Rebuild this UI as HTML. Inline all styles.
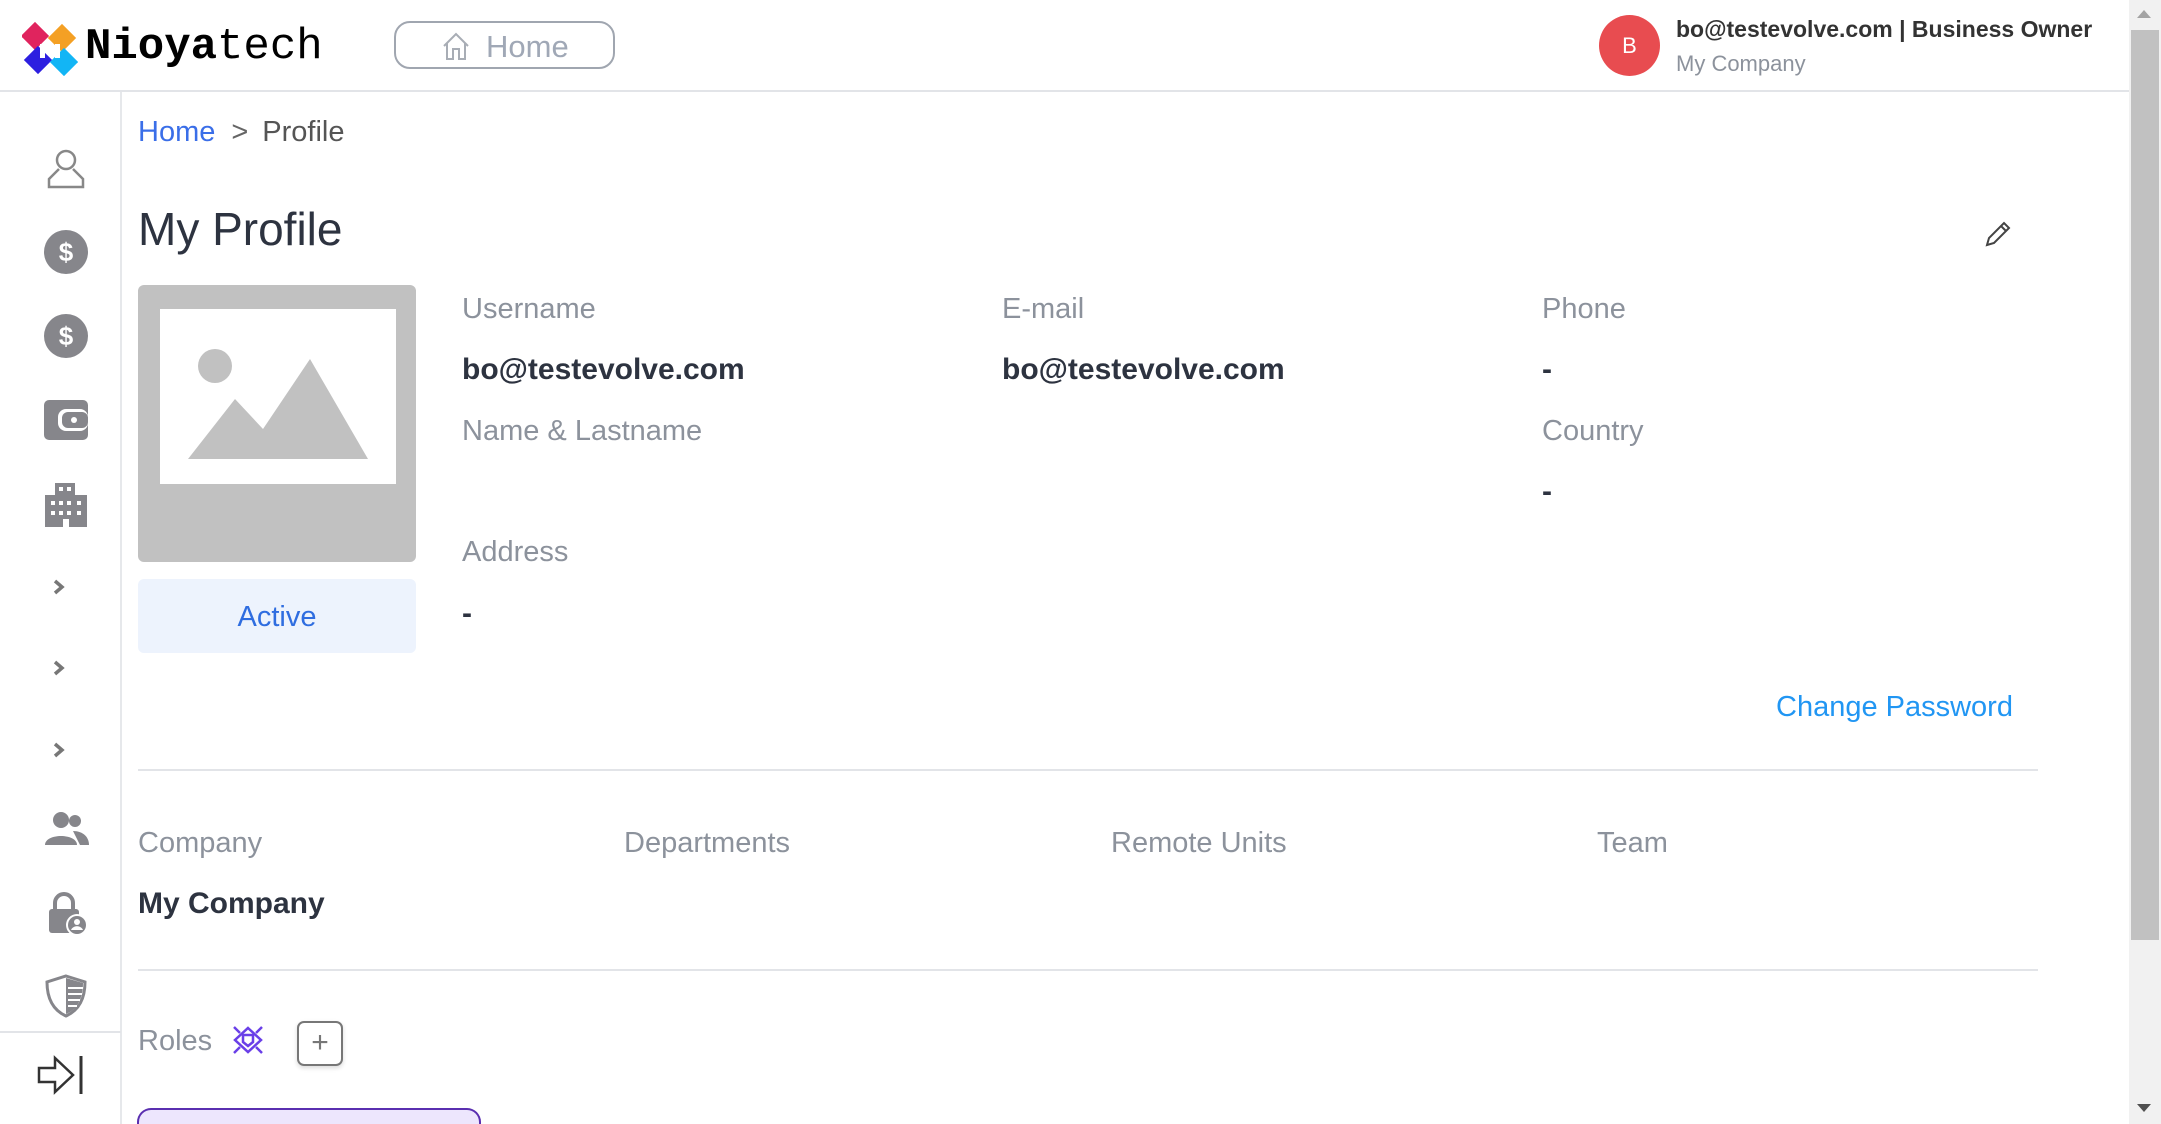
<!DOCTYPE html>
<html style="overflow:hidden;width:2161px;height:1124px"><head><meta charset="utf-8"><style>
*{margin:0;padding:0;box-sizing:border-box}
body{width:2161px;height:1124px;overflow:hidden;background:#fff;font-family:"Liberation Sans",sans-serif;position:relative;color:#2d3340}
.a{position:absolute;white-space:nowrap}
.lbl{font-size:29px;color:#8c929c}
.val{font-size:30px;font-weight:bold;color:#2d3340}
.ic{position:absolute;left:43px;width:46px;height:46px}
</style></head><body>
<div class="a" style="left:0;top:90px;width:2129px;height:2px;background:#e2e4e8"></div>
<div class="a" style="left:120px;top:92px;width:2px;height:1032px;background:#e6e8eb"></div>
<div class="a" style="left:0;top:1031px;width:121px;height:2px;background:#e2e4e8"></div>
<div class="a" style="left:2129px;top:0;width:32px;height:1124px;background:#f1f1f1"></div>
<div class="a" style="left:2131px;top:30px;width:28px;height:910px;background:#c1c1c1"></div>
<div class="a" style="left:2137px;top:10px;border:7px solid transparent;border-bottom:8px solid #a3a3a3;border-top:0"></div>
<div class="a" style="left:2137px;top:1104px;border:7px solid transparent;border-top:8px solid #505050;border-bottom:0"></div>
<svg class="a" style="left:22px;top:20px" width="56" height="56" viewBox="0 0 56 56">
<rect x="3" y="6" width="20" height="20" transform="rotate(45 13 16)" fill="#e0245e"/>
<rect x="30" y="8" width="20" height="20" transform="rotate(45 40 18)" fill="#f4a024"/>
<rect x="6" y="30" width="20" height="20" transform="rotate(45 16 40)" fill="#2d1fe0"/>
<rect x="32" y="32" width="20" height="20" transform="rotate(45 42 42)" fill="#12b5f5"/>
<rect x="18" y="24" width="5" height="14" fill="#fff"/><rect x="33" y="24" width="5" height="14" fill="#fff"/>
</svg>
<div class="a" style="left:85px;top:22px;font-family:'Liberation Mono',monospace;font-size:44px;color:#000"><b>Nioya</b>tech</div>
<div class="a" style="left:394px;top:21px;width:221px;height:48px;border:2px solid #a0a6b0;border-radius:16px"></div>
<svg class="a" style="left:440px;top:30px" width="32" height="32" viewBox="0 0 32 32"><path d="M4 16 L16 4 L28 16 M7 13 V29 H13 V19 H19 V29 H25 V13" fill="none" stroke="#a8adb5" stroke-width="2"/></svg>
<div class="a" style="left:486px;top:29px;font-size:31px;color:#a0a8b6">Home</div>
<div class="a" style="left:1599px;top:15px;width:61px;height:61px;border-radius:50%;background:#e84c50;color:#fff;font-size:22px;text-align:center;line-height:61px">B</div>
<div class="a" style="left:1676px;top:16px;font-size:23px;font-weight:bold;color:#333">bo@testevolve.com | Business Owner</div>
<div class="a" style="left:1676px;top:51px;font-size:22px;color:#8c929c">My Company</div>
<svg class="ic" style="top:145px" viewBox="0 0 46 46"><circle cx="23" cy="15" r="9" fill="none" stroke="#888" stroke-width="2.5"/><path d="M16 24 L6 34 V42 H40 V34 L30 24" fill="none" stroke="#888" stroke-width="2.5"/></svg>
<svg class="ic" style="top:229px" viewBox="0 0 46 46"><circle cx="23" cy="23" r="22" fill="#86868b"/><text x="23" y="32" font-size="26" font-weight="bold" text-anchor="middle" fill="#fff" font-family="Liberation Sans">$</text></svg>
<svg class="ic" style="top:313px" viewBox="0 0 46 46"><circle cx="23" cy="23" r="22" fill="#86868b"/><text x="23" y="32" font-size="26" font-weight="bold" text-anchor="middle" fill="#fff" font-family="Liberation Sans">$</text></svg>
<svg class="ic" style="top:397px" viewBox="0 0 46 46"><rect x="1" y="3" width="44" height="40" rx="5" fill="#86868b"/><rect x="15" y="12" width="30" height="22" rx="8" fill="#fff"/><rect x="19" y="15" width="26" height="16" rx="6" fill="#86868b"/><circle cx="31" cy="23" r="3" fill="#fff"/></svg>
<svg class="ic" style="top:481px" viewBox="0 0 46 46"><path d="M12 2 H32 V14 H44 V46 H2 V14 H12Z" fill="#86868b"/><g fill="#fff"><rect x="16" y="6" width="4" height="4"/><rect x="24" y="6" width="4" height="4"/><rect x="8" y="20" width="4" height="4"/><rect x="16" y="20" width="4" height="4"/><rect x="24" y="20" width="4" height="4"/><rect x="34" y="20" width="4" height="4"/><rect x="8" y="30" width="4" height="4"/><rect x="16" y="30" width="4" height="4"/><rect x="24" y="30" width="4" height="4"/><rect x="34" y="30" width="4" height="4"/><rect x="20" y="38" width="6" height="8"/></g></svg>
<svg class="ic" style="top:564px;left:36px" viewBox="0 0 46 46"><path d="M19 17 L26 23 L19 29" fill="none" stroke="#777" stroke-width="3.5"/></svg>
<svg class="ic" style="top:645px;left:36px" viewBox="0 0 46 46"><path d="M19 17 L26 23 L19 29" fill="none" stroke="#777" stroke-width="3.5"/></svg>
<svg class="ic" style="top:727px;left:36px" viewBox="0 0 46 46"><path d="M19 17 L26 23 L19 29" fill="none" stroke="#777" stroke-width="3.5"/></svg>
<svg class="ic" style="top:807px" viewBox="0 0 46 46"><circle cx="18" cy="13" r="8" fill="#86868b"/><circle cx="32" cy="14" r="6" fill="#86868b"/><path d="M2 38 C2 26 34 26 34 38 Z" fill="#86868b"/><path d="M30 24 C40 24 46 30 46 38 H37 Z" fill="#86868b"/></svg>
<svg class="ic" style="top:891px" viewBox="0 0 46 46"><path d="M12 18 V12 A9 9 0 0 1 30 12 V18" fill="none" stroke="#86868b" stroke-width="4"/><rect x="6" y="18" width="30" height="24" rx="3" fill="#86868b"/><circle cx="34" cy="34" r="11" fill="#fff"/><circle cx="34" cy="34" r="9" fill="#86868b"/><circle cx="34" cy="31" r="3" fill="#fff"/><path d="M28 39 C30 34 38 34 40 39Z" fill="#fff"/></svg>
<svg class="ic" style="top:973px" viewBox="0 0 46 46"><path d="M23 3 L42 9 C42 28 34 38 23 43 C12 38 4 28 4 9Z" fill="none" stroke="#86868b" stroke-width="3"/><path d="M23 5 L40 10 C40 27 33 37 23 41Z" fill="#86868b"/><g stroke="#fff" stroke-width="2"><line x1="25" y1="15" x2="40" y2="15"/><line x1="25" y1="21" x2="39" y2="21"/><line x1="25" y1="27" x2="37" y2="27"/><line x1="25" y1="33" x2="34" y2="33"/></g></svg>
<svg class="a" style="left:36px;top:1052px" width="50" height="46" viewBox="0 0 50 46"><path d="M3 16 H19 V6 L37 23 L19 40 V30 H3Z" fill="none" stroke="#333" stroke-width="2.5"/><line x1="45" y1="4" x2="45" y2="42" stroke="#333" stroke-width="3"/></svg>
<div class="a" style="left:138px;top:116px;font-size:29px"><span style="color:#3a6ee8">Home</span><span style="color:#666;margin:0 14px 0 16px">&gt;</span><span style="color:#555">Profile</span></div>
<div class="a" style="left:138px;top:202px;font-size:46px;color:#2d3340">My Profile</div>
<svg class="a" style="left:1982px;top:218px" width="32" height="32" viewBox="0 0 32 32"><path d="M5 27 L7 20 L22 5 L27 10 L12 25Z M19 8 L24 13" fill="none" stroke="#444" stroke-width="2"/></svg>
<div class="a" style="left:138px;top:285px;width:278px;height:277px;background:#c1c1c1;border-radius:6px"></div>
<div class="a" style="left:160px;top:309px;width:236px;height:175px;background:#fff"></div>
<svg class="a" style="left:160px;top:309px" width="236" height="175" viewBox="0 0 236 175"><circle cx="55" cy="57" r="17" fill="#c1c1c1"/><path d="M28 150 L75 90 L103 120 L150 50 L208 150Z" fill="#c1c1c1"/></svg>
<div class="a" style="left:138px;top:579px;width:278px;height:74px;background:#edf3fd;border-radius:6px;color:#2f6de0;font-size:29px;text-align:center;line-height:76px">Active</div>
<div class="a lbl" style="left:462px;top:293px">Username</div>
<div class="a lbl" style="left:1002px;top:293px">E-mail</div>
<div class="a lbl" style="left:1542px;top:293px">Phone</div>
<div class="a val" style="left:462px;top:353px">bo@testevolve.com</div>
<div class="a val" style="left:1002px;top:353px">bo@testevolve.com</div>
<div class="a val" style="left:1542px;top:353px">-</div>
<div class="a lbl" style="left:462px;top:415px">Name &amp; Lastname</div>
<div class="a lbl" style="left:1542px;top:415px">Country</div>
<div class="a val" style="left:1542px;top:475px">-</div>
<div class="a lbl" style="left:462px;top:536px">Address</div>
<div class="a val" style="left:462px;top:597px">-</div>
<div class="a" style="left:1776px;top:691px;font-size:29px;color:#2196f3">Change Password</div>
<div class="a" style="left:138px;top:769px;width:1900px;height:2px;background:#e2e4e8"></div>
<div class="a lbl" style="left:138px;top:827px">Company</div>
<div class="a lbl" style="left:624px;top:827px">Departments</div>
<div class="a lbl" style="left:1111px;top:827px">Remote Units</div>
<div class="a lbl" style="left:1597px;top:827px">Team</div>
<div class="a val" style="left:138px;top:887px">My Company</div>
<div class="a" style="left:138px;top:969px;width:1900px;height:2px;background:#e2e4e8"></div>
<div class="a lbl" style="left:138px;top:1025px">Roles</div>
<svg class="a" style="left:232px;top:1025px" width="32" height="30" viewBox="0 0 32 30"><path d="M16 3 L29 15 L16 27 L3 15Z" fill="none" stroke="#6a3fe8" stroke-width="2.5"/><path d="M11 10 H21 V17 L16 21 L11 17Z" fill="none" stroke="#6a3fe8" stroke-width="2.5"/><g stroke="#6a3fe8" stroke-width="2.5"><line x1="2" y1="2" x2="8" y2="8"/><line x1="30" y1="2" x2="24" y2="8"/><line x1="2" y1="28" x2="8" y2="22"/><line x1="30" y1="28" x2="24" y2="22"/></g></svg>
<div class="a" style="left:297px;top:1021px;width:46px;height:45px;border:2px solid #777;border-radius:7px;box-shadow:0 2px 5px rgba(0,0,0,.15);text-align:center;line-height:40px;font-size:30px;color:#777">+</div>
<div class="a" style="left:137px;top:1108px;width:344px;height:16px;background:#ede6fd;border:2px solid #5a2fb0;border-bottom:0;border-radius:14px 14px 0 0"></div>
</body></html>
